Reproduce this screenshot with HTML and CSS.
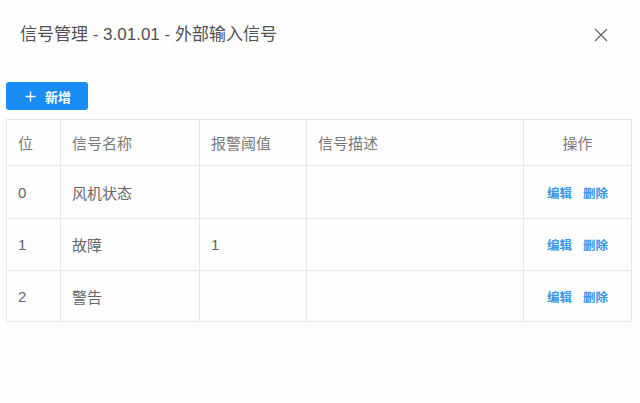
FILE: index.html
```html
<!DOCTYPE html>
<html lang="zh-CN">
<head>
<meta charset="utf-8">
<title>信号管理</title>
<link rel="stylesheet" href="styles.css">
</head>
<body>
<div class="dialog">
  <div class="dialog-header">
    <span class="dialog-title">信号管理 - 3.01.01 - 外部输入信号</span>
    <button class="close-btn" aria-label="关闭">
      <svg width="14" height="14" viewBox="0 0 14 14"><path d="M1 1L13 13M13 1L1 13" stroke="#666" stroke-width="1.2" fill="none"/></svg>
    </button>
  </div>
  <div class="toolbar">
    <button class="btn-primary">
      <svg width="11" height="11" viewBox="0 0 11 11"><path d="M5.5 0.5V10.5M0.5 5.5H10.5" stroke="#fff" stroke-width="1.4" fill="none"/></svg>
      <span>新增</span>
    </button>
  </div>
  <div class="table-wrap">
    <div class="grid">
      <div class="row head">
        <div class="cell">位</div>
        <div class="cell">信号名称</div>
        <div class="cell">报警阈值</div>
        <div class="cell">信号描述</div>
        <div class="cell center">操作</div>
      </div>
      <div class="row body r1">
        <div class="cell">0</div>
        <div class="cell">风机状态</div>
        <div class="cell"></div>
        <div class="cell"></div>
        <div class="cell center ops"><a>编辑</a><a>删除</a></div>
      </div>
      <div class="row body">
        <div class="cell">1</div>
        <div class="cell">故障</div>
        <div class="cell">1</div>
        <div class="cell"></div>
        <div class="cell center ops"><a>编辑</a><a>删除</a></div>
      </div>
      <div class="row body r3">
        <div class="cell">2</div>
        <div class="cell">警告</div>
        <div class="cell"></div>
        <div class="cell"></div>
        <div class="cell center ops"><a>编辑</a><a>删除</a></div>
      </div>
    </div>
  </div>
</div>
</body>
</html>
```

FILE: styles.css
```css
html, body {
  margin: 0;
  padding: 0;
  background: #fefefe;
}
body {
  font-family: "Liberation Sans", "Noto Sans CJK SC", sans-serif;
  width: 640px;
  height: 403px;
  overflow: hidden;
}
.dialog {
  display: flex;
  flex-direction: column;
}
.dialog-header {
  display: flex;
  justify-content: space-between;
  align-items: center;
  padding: 23px 32px 0 20px;
  height: 24px;
}
.dialog-title {
  font-size: 17px;
  line-height: 24px;
  color: #505050;
}
.close-btn {
  border: 0;
  background: none;
  padding: 0;
  width: 14px;
  height: 14px;
  display: flex;
}
.toolbar {
  padding: 35px 0 0 6px;
  display: flex;
}
.btn-primary {
  display: flex;
  align-items: center;
  justify-content: center;
  gap: 9px;
  width: 82px;
  height: 28px;
  border: 0;
  border-radius: 3px;
  background: #1a8cf5;
  color: #fff;
  font-family: "Liberation Sans", "Noto Sans CJK SC", sans-serif;
  font-size: 13px;
  font-weight: 700;
  padding: 0 0 0 2px;
}
.table-wrap {
  padding: 9px 0 0 6px;
}
.grid {
  width: 625px;
  border-left: 1px solid #e6e6e6;
  border-top: 1px solid #e6e6e6;
}
.row {
  display: grid;
  grid-template-columns: 54px 139px 107px 217px 108px;
  border-bottom: 1px solid #e6e6e6;
}
.row.head { height: 45px; }
.row.body { height: 51px; }
.row.r1 { height: 52px; }
.row.r3 { height: 50px; }
.cell {
  border-right: 1px solid #e6e6e6;
  padding: 0 11px;
  display: flex;
  align-items: center;
  font-size: 15px;
  color: #666;
  overflow: hidden;
  white-space: nowrap;
}
.head .cell { color: #7a7a7a; }
.cell.center { justify-content: center; padding: 0; }
.ops { gap: 11px; }
.ops a {
  color: #3896e6;
  font-size: 12.5px;
  font-weight: 700;
  cursor: pointer;
}
```
